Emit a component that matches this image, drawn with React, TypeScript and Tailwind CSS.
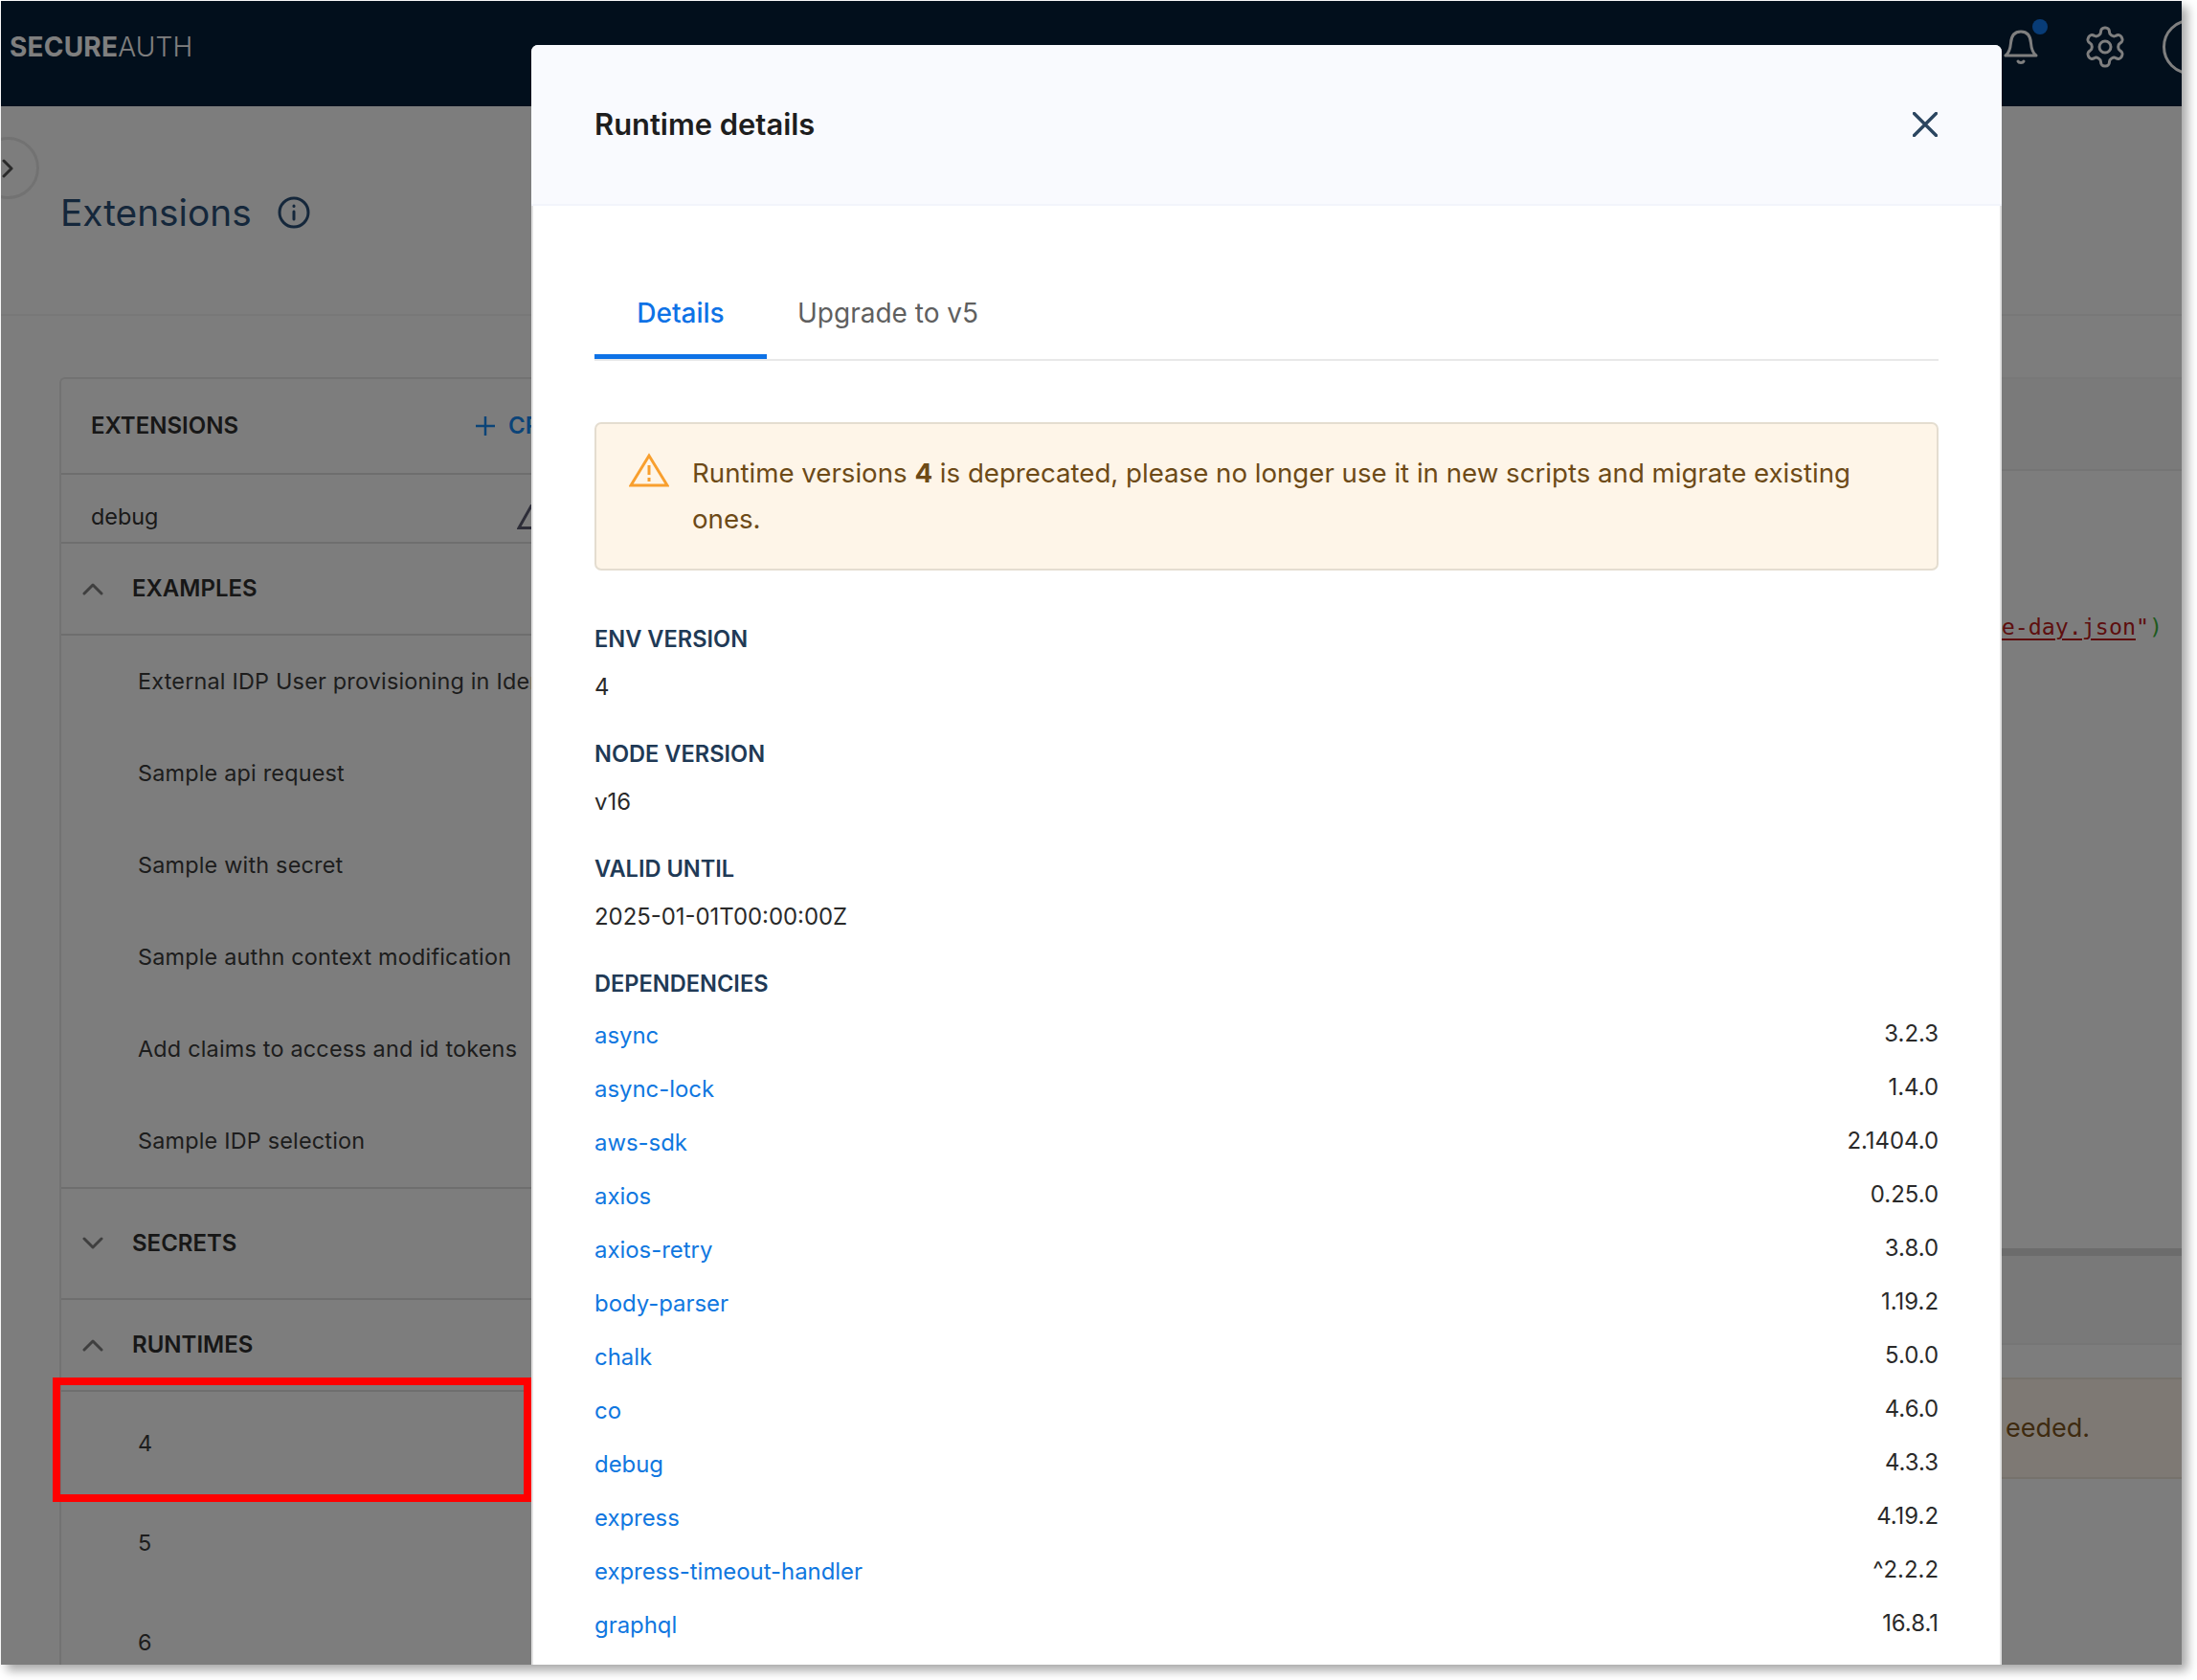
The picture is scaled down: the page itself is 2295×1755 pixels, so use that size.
import React from "react";

const font = { fontFamily: '"Inter", "Liberation Sans", sans-serif' };

const deps: [string, string][] = [
  ["async", "3.2.3"],
  ["async-lock", "1.4.0"],
  ["aws-sdk", "2.1404.0"],
  ["axios", "0.25.0"],
  ["axios-retry", "3.8.0"],
  ["body-parser", "1.19.2"],
  ["chalk", "5.0.0"],
  ["co", "4.6.0"],
  ["debug", "4.3.3"],
  ["express", "4.19.2"],
  ["express-timeout-handler", "^2.2.2"],
  ["graphql", "16.8.1"],
];

const examples = [
  "External IDP User provisioning in Identity Pool",
  "Sample api request",
  "Sample with secret",
  "Sample authn context modification",
  "Add claims to access and id tokens",
  "Sample IDP selection",
];

function Chevron({ up }: { up?: boolean }) {
  return (
    <svg width="22" height="14" viewBox="0 0 22 14" fill="none" stroke="#7f7f7f" strokeWidth="3" strokeLinecap="round" strokeLinejoin="round">
      <path d={up ? "M2 12 L11 3 L20 12" : "M2 2 L11 11 L20 2"} />
    </svg>
  );
}

function SectionRow({ label, up, h }: { label: string; up?: boolean; h: string }) {
  return (
    <div className={`flex items-center gap-[30px] pl-[22px] border-b-2 border-[#dcdcdc] ${h}`}>
      <Chevron up={up} />
      <span className="text-[24px] font-semibold text-[#2e2e2e]">{label}</span>
    </div>
  );
}

function Field({ label, value }: { label: string; value: string }) {
  return (
    <div className="flex flex-col h-[120px]">
      <div className="h-[50px] leading-[50px] text-[23.6px] font-semibold text-[#1f3a56]">{label}</div>
      <div className="h-[50px] leading-[50px] text-[23.9px] text-[#2a2a2a]">{value}</div>
    </div>
  );
}

export default function App() {
  return (
    <div className="w-[2295px] h-[1755px] bg-white" style={font}>
      <div className="relative ml-[1px] mt-[1px] w-[2278px] h-[1738px] overflow-hidden bg-[#fbfbfb] shadow-[6px_6px_10px_rgba(0,0,0,0.35)]">
        {/* Nav */}
        <div className="flex items-center justify-between h-[110px] pb-[14px] pl-[9px] bg-[#041e39]">
          <div className="text-[28px] leading-none tracking-[0.2px] text-white">
            <span className="font-bold">SECURE</span>
            <span className="font-light">AUTH</span>
          </div>
          <div className="flex items-center gap-[46px] -mr-[38px]">
            <div className="relative w-[36px] h-[38px]">
              <svg width="36" height="38" viewBox="0 0 36 38" fill="none" stroke="#fff" strokeWidth="3" strokeLinecap="round" strokeLinejoin="round">
                <path d="M2 28 H34 C30 25 29 21 28.5 15 C28 7 24 3 18 3 C12 3 8 7 7.5 15 C7 21 6 25 2 28 Z" />
                <path d="M15 34 C16 36 20 36 21 34" />
              </svg>
              <span className="absolute -top-[10px] -right-[10px] w-[16px] h-[16px] rounded-full bg-[#1078ee]" />
            </div>
            <svg width="48" height="48" viewBox="0 0 24 24" fill="none" stroke="#fff" strokeWidth="1.5" strokeLinecap="round" strokeLinejoin="round">
              <path d="M12.22 2h-.44a2 2 0 0 0-2 2v.18a2 2 0 0 1-1 1.73l-.43.25a2 2 0 0 1-2 0l-.15-.08a2 2 0 0 0-2.73.73l-.22.38a2 2 0 0 0 .73 2.73l.15.1a2 2 0 0 1 1 1.72v.51a2 2 0 0 1-1 1.74l-.15.09a2 2 0 0 0-.73 2.73l.22.38a2 2 0 0 0 2.73.73l.15-.08a2 2 0 0 1 2 0l.43.25a2 2 0 0 1 1 1.73V20a2 2 0 0 0 2 2h.44a2 2 0 0 0 2-2v-.18a2 2 0 0 1 1-1.73l.43-.25a2 2 0 0 1 2 0l.15.08a2 2 0 0 0 2.73-.73l.22-.39a2 2 0 0 0-.73-2.73l-.15-.08a2 2 0 0 1-1-1.74v-.5a2 2 0 0 1 1-1.74l.15-.09a2 2 0 0 0 .73-2.73l-.22-.38a2 2 0 0 0-2.73-.73l-.15.08a2 2 0 0 1-2 0l-.43-.25a2 2 0 0 1-1-1.73V4a2 2 0 0 0-2-2z" />
              <circle cx="12" cy="12" r="3" />
            </svg>
            <div className="w-[58px] h-[58px] rounded-full border-[3px] border-white -ml-[10px]" />
          </div>
        </div>

        {/* Page header */}
        <div className="relative flex items-center gap-[27px] h-[219px] pl-[62px] pt-[5px] border-b-2 border-[#f0f0f0]">
          <div className="absolute -left-[25px] top-[32px] w-[65px] h-[65px] rounded-full border-[3px] border-[#e4e4e4] bg-[#fbfbfb] flex items-center justify-end pr-[24px]">
            <svg width="12" height="20" viewBox="0 0 12 20" fill="none" stroke="#555" strokeWidth="3" strokeLinecap="round" strokeLinejoin="round">
              <path d="M2 2 L10 10 L2 18" />
            </svg>
          </div>
          <span className="text-[38.8px] leading-none text-[#2a4f76]">Extensions</span>
          <svg width="34" height="34" viewBox="0 0 34 34" fill="none" stroke="#2a4f76" strokeWidth="3" strokeLinecap="round">
            <circle cx="17" cy="17" r="15" />
            <path d="M17 16 V24" />
            <path d="M17 10 V10.5" />
          </svg>
        </div>

        {/* Body */}
        <div className="flex items-start pl-[61px] pt-[64px]">
          {/* Left card */}
          <div className="w-[560px] shrink-0 border-l-2 border-t-2 border-[#e4e4e4] rounded-tl-[6px]">
            <div className="flex items-center justify-between h-[100px] pl-[31px] border-b-2 border-[#dcdcdc]">
              <span className="text-[24px] font-semibold text-[#2e2e2e]">EXTENSIONS</span>
              <div className="flex items-center gap-[14px] text-[24px] font-semibold text-[#1788f0] w-[125px] whitespace-nowrap">
                <svg width="20" height="20" viewBox="0 0 20 20" fill="none" stroke="#1788f0" strokeWidth="2.5" className="shrink-0">
                  <path d="M10 0 V20 M0 10 H20" />
                </svg>
                <span>CREATE</span>
              </div>
            </div>
            <div className="flex items-center justify-between h-[72px] pl-[31px] pt-[18px] border-b-2 border-[#dcdcdc]">
              <span className="text-[23.4px] text-[#333]">debug</span>
              <svg width="40" height="26" viewBox="0 0 40 26" fill="none" stroke="#5a5a70" strokeWidth="3" className="mr-[42px] shrink-0">
                <path d="M15 1.5 L2 24.5 H28 Z" />
              </svg>
            </div>
            <SectionRow label="EXAMPLES" up h="h-[96px]" />
            <div className="h-[578px] pl-[80px] border-b-2 border-[#dcdcdc] overflow-hidden">
              {examples.map((e) => (
                <div key={e} className="h-[96px] flex items-center whitespace-nowrap text-[23.4px] tracking-[0.2px] text-[#3a3a3a]">{e}</div>
              ))}
            </div>
            <SectionRow label="SECRETS" h="h-[116px]" />
            <SectionRow label="RUNTIMES" up h="h-[96px]" />
            <div className="pl-[80px] pt-[2px] text-[23.4px] text-[#3a3a3a]">
              <div className="h-[104px] flex items-center">4</div>
              <div className="h-[104px] flex items-center">5</div>
              <div className="h-[104px] flex items-center">6</div>
            </div>
          </div>

          {/* Right panel behind the modal */}
          <div className="flex-1 min-w-0 border-t-2 border-[#f0f0f0]">
            <div className="h-[96px] bg-[#f5f5f5] border-b-2 border-[#ebebeb]" />
            <div className="h-[812px] relative">
              <div className="absolute top-[148px] right-[20px] font-['DejaVu_Sans_Mono'] text-[23.3px] leading-[30px] whitespace-nowrap">
                <span className="text-[#bc1c1c] underline underline-offset-4 decoration-2">e-day.json</span>
                <span className="text-[#bc1c1c]">"</span>
                <span className="text-[#3cb43c]">)</span>
              </div>
            </div>
            <div className="h-[8px] bg-[#d8d8d8]" />
            <div className="h-[93px] bg-[#f2f2f2] border-b-2 border-[#ececec]" />
            <div className="h-[34px] bg-[#fbfbfb]" />
            <div className="flex items-center justify-end h-[106px] pr-[96px] bg-[#fcf3e8] border-y-2 border-[#ece4d8] text-[27px] text-[#7c5520]">
              eeded.
            </div>
          </div>
        </div>

        {/* Backdrop */}
        <div className="absolute inset-0 bg-black/50" />

        {/* Annotation */}
        <div className="absolute left-[54px] top-[1438px] w-[500px] h-[130px] border-[8px] border-[#ff0000]" />

        {/* Modal */}
        <div className="absolute left-[554px] top-[46px] bottom-0 w-[1536px] bg-white rounded-t-[7px] overflow-hidden flex flex-col">
          <div className="flex items-center justify-between shrink-0 h-[168px] pl-[66px] pr-[67px] bg-[#f9fafe] border-b-2 border-[#f2f4fb]">
            <span className="text-[30.9px] font-semibold text-[#1e1e1e] pt-[1px]">Runtime details</span>
            <svg width="26" height="26" viewBox="0 0 26 26" fill="none" stroke="#2b4560" strokeWidth="3.4" strokeLinecap="round">
              <path d="M1.5 1.5 L24.5 24.5 M24.5 1.5 L1.5 24.5" />
            </svg>
          </div>
          <div className="flex-1 px-[64px] pt-[92px] overflow-hidden border-x-2 border-[#e2e2e2]">
            <div className="flex h-[70px] border-b-2 border-[#e8e8e8]">
              <div className="w-[180px] h-[68px] flex items-start justify-center text-[28px] leading-[40px] font-medium text-[#0e72e6] border-b-[5px] border-[#0e72e6]">Details</div>
              <div className="pl-[32px] text-[28px] leading-[40px] text-[#5f5f5f]">Upgrade to v5</div>
            </div>
            <div className="mt-[64px] flex gap-[24px] h-[155px] pl-[34px] pr-[60px] pt-[30px] border-2 border-[#e4ddd0] rounded-[7px] bg-[#fef5e8]">
              <svg width="42" height="36" viewBox="0 0 42 36" fill="none" stroke="#f89f2e" strokeWidth="3" strokeLinejoin="miter" className="shrink-0">
                <path d="M21 3 L2 34 H40 Z" />
                <path d="M21 13 V23 M21 26 V30" />
              </svg>
              <p className="-mt-[3px] text-[27.65px] leading-[48px] text-[#6d4a17]">
                Runtime versions <b className="font-bold">4</b> is deprecated, please no longer use it in new scripts and migrate existing ones.
              </p>
            </div>
            <div className="mt-[46.5px]">
              <Field label="ENV VERSION" value="4" />
              <Field label="NODE VERSION" value="v16" />
              <Field label="VALID UNTIL" value="2025-01-01T00:00:00Z" />
              <div className="h-[50px] leading-[50px] text-[23.6px] font-semibold text-[#1f3a56]">DEPENDENCIES</div>
              <div className="mt-[1.5px]">
                {deps.map(([n, v]) => (
                  <div key={n} className="flex justify-between h-[56px] items-center text-[23.9px]">
                    <span className="text-[#1077e0]">{n}</span>
                    <span className="text-[#2a2a2a] -mt-[5px]">{v}</span>
                  </div>
                ))}
              </div>
            </div>
          </div>
        </div>
      </div>
    </div>
  );
}
